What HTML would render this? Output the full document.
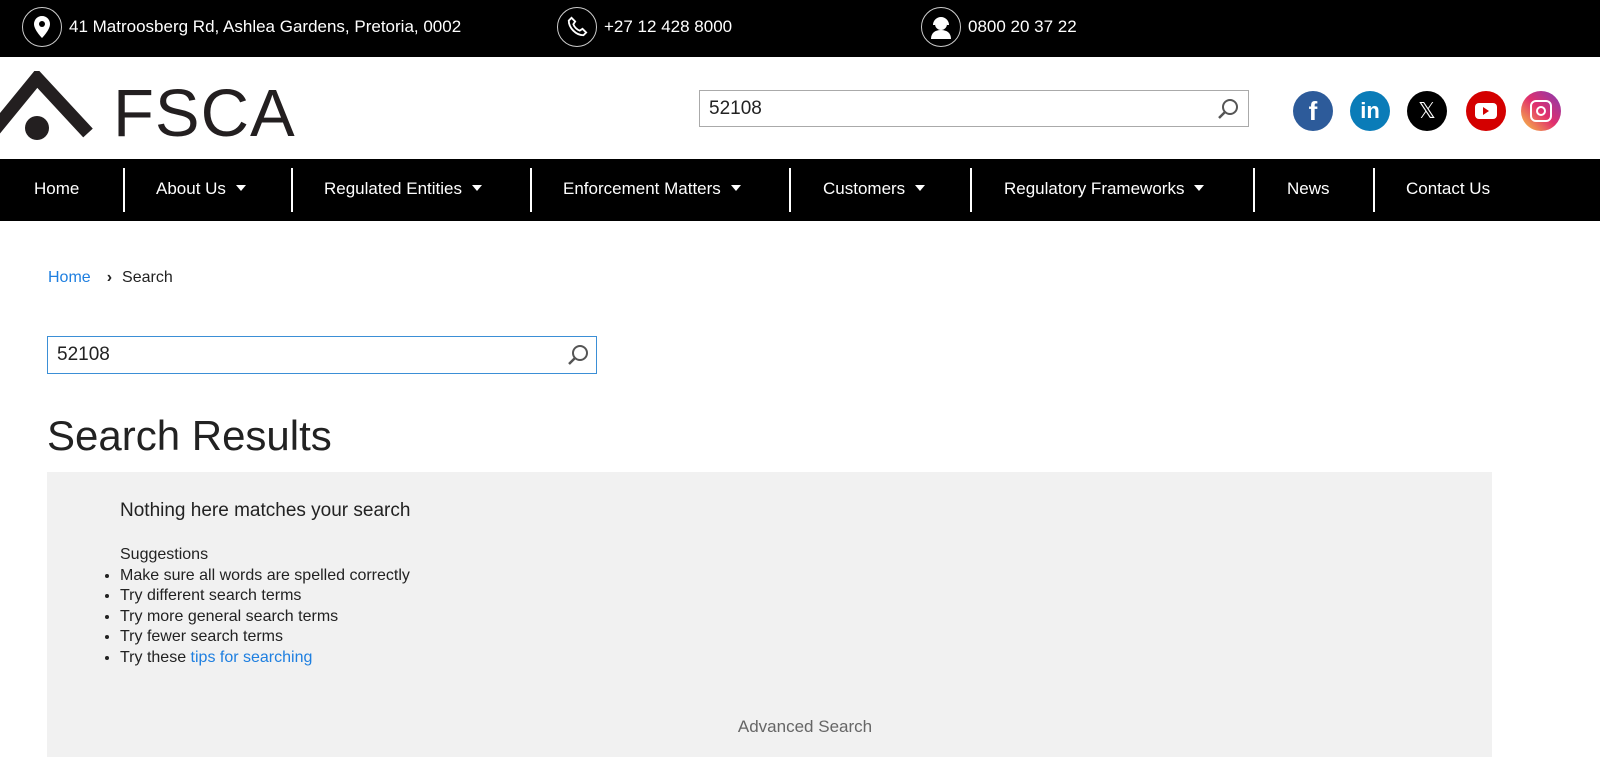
<!DOCTYPE html>
<html><head><style>
*{margin:0;padding:0;box-sizing:border-box}
body{width:1600px;height:757px;overflow:hidden;font-family:"Liberation Sans",sans-serif;background:#fff;color:#222}
.top{height:57px;background:#000;color:#fff;position:relative;font-size:17px}
.top .it{position:absolute;top:7px;display:flex;align-items:center}
.top .c{width:40px;height:40px;border:1.5px solid #ccc;border-radius:50%;display:flex;align-items:center;justify-content:center;margin-right:7px}
.hdr{height:102px;position:relative}
.srch{position:absolute;border:1px solid #aaa;background:#fff;font-size:19px;padding-left:9px;display:flex;align-items:center}
.nav{height:62px;background:#000;color:#fff;display:flex;align-items:center;font-size:17px;position:relative}
.nav span{position:absolute;top:20px}
.nav i{position:absolute;top:9px;width:2px;height:44px;background:#fff}
.tri{display:inline-block;border-left:5px solid transparent;border-right:5px solid transparent;border-top:6px solid #fff;margin-left:10px;vertical-align:3px}
.soc{position:absolute;top:34px;width:40px;height:40px;border-radius:50%;display:flex;align-items:center;justify-content:center;color:#fff;font-weight:bold}
</style></head><body>
<div class="top">
 <div class="it" style="left:22px"><div class="c"><svg width="20" height="24" viewBox="0 0 20 24"><path d="M10 1C5 1 2 5 2 9c0 6 8 14 8 14s8-8 8-14c0-4-3-8-8-8z" fill="#fff"/><circle cx="10" cy="9" r="3" fill="#000"/></svg></div>41 Matroosberg Rd, Ashlea Gardens, Pretoria, 0002</div>
 <div class="it" style="left:557px"><div class="c"><svg width="22" height="22" viewBox="0 0 24 24"><path d="M6 2l4 4-2 3c1 3 4 6 7 7l3-2 4 4-3 3C11 21 3 13 3 5z" fill="none" stroke="#fff" stroke-width="2"/></svg></div>+27 12 428 8000</div>
 <div class="it" style="left:921px"><div class="c"><svg width="26" height="26" viewBox="0 0 26 26"><circle cx="13" cy="10" r="6" fill="#fff"/><path d="M3 25c0-6 4-9 10-9s10 3 10 9z" fill="#fff"/><path d="M6 11a7 7 0 0114 0" stroke="#fff" stroke-width="2" fill="none"/></svg></div>0800 20 37 22</div>
</div>
<div class="hdr">
 <svg style="position:absolute;left:0;top:14px" width="100" height="72" viewBox="0 0 100 72"><path d="M-8 62L37 7 88 62" fill="none" stroke="#231f20" stroke-width="13"/><circle cx="37" cy="57" r="12" fill="#231f20"/></svg>
 <div style="position:absolute;left:113px;top:18px;font-size:67px;color:#231f20;letter-spacing:1px">FSCA</div>
 <div class="srch" style="left:699px;top:33px;width:550px;height:37px">52108<svg style="position:absolute;right:8px;top:6px" width="24" height="24" viewBox="0 0 24 24"><circle cx="14" cy="10" r="7" fill="none" stroke="#555" stroke-width="2"/><path d="M9 15l-6 6" stroke="#555" stroke-width="2.5"/></svg></div>
 <div class="soc" style="left:1293px;background:#2d5b9a;font-size:26px">f</div>
 <div class="soc" style="left:1350px;background:#0a7cb8;font-size:22px">in</div>
 <div class="soc" style="left:1407px;background:#000;font-size:22px;font-weight:normal">𝕏</div>
 <div class="soc" style="left:1466px;background:#d40000"><div style="width:22px;height:16px;background:#fff;border-radius:4px;display:flex;align-items:center;justify-content:center"><div style="border-left:6px solid #d40000;border-top:4px solid transparent;border-bottom:4px solid transparent"></div></div></div>
 <div class="soc" style="left:1521px;background:linear-gradient(45deg,#f9c943,#e1306c 50%,#833ab4)"><div style="width:22px;height:22px;border:2.5px solid #fff;border-radius:6px;display:flex;align-items:center;justify-content:center"><div style="width:10px;height:10px;border:2.5px solid #fff;border-radius:50%"></div></div></div>
</div>
<div class="nav" style="position:absolute;top:159px;width:1600px">
 <span style="left:34px">Home</span><i style="left:123px"></i>
 <span style="left:156px">About Us<b class="tri"></b></span><i style="left:291px"></i>
 <span style="left:324px">Regulated Entities<b class="tri"></b></span><i style="left:530px"></i>
 <span style="left:563px">Enforcement Matters<b class="tri"></b></span><i style="left:789px"></i>
 <span style="left:823px">Customers<b class="tri"></b></span><i style="left:970px"></i>
 <span style="left:1004px">Regulatory Frameworks<b class="tri"></b></span><i style="left:1253px"></i>
 <span style="left:1287px">News</span><i style="left:1373px"></i>
 <span style="left:1406px">Contact Us</span>
</div>
<div style="position:absolute;top:269px;left:48px;font-size:16px"><span style="color:#1e7fe0">Home</span><span style="margin:0 10px 0 16px;font-weight:bold">›</span>Search</div>
<div class="srch" style="left:47px;top:336px;width:550px;height:38px;border-color:#3b8fd6;font-size:19px">52108<svg style="position:absolute;right:6px;top:6px" width="24" height="24" viewBox="0 0 24 24"><circle cx="14" cy="10" r="7" fill="none" stroke="#555" stroke-width="2"/><path d="M9 15l-6 6" stroke="#555" stroke-width="2.5"/></svg></div>
<div style="position:absolute;left:47px;top:412px;font-size:42px;color:#222">Search Results</div>
<div style="position:absolute;left:47px;top:472px;width:1445px;height:285px;background:#f1f1f1;font-size:16px">
 <div style="position:absolute;left:73px;top:28px;font-size:19px">Nothing here matches your search</div>
 <div style="position:absolute;left:73px;top:73px;line-height:20.5px">Suggestions
 <ul style="margin-left:-18px;list-style:disc;padding-left:18px"><li>Make sure all words are spelled correctly</li><li>Try different search terms</li><li>Try more general search terms</li><li>Try fewer search terms</li><li>Try these <span style="color:#1e7fe0">tips for searching</span></li></ul></div>
 <div style="position:absolute;left:0;width:1516px;text-align:center;top:245px;color:#666;font-size:17px">Advanced Search</div>
</div>
</body></html>
